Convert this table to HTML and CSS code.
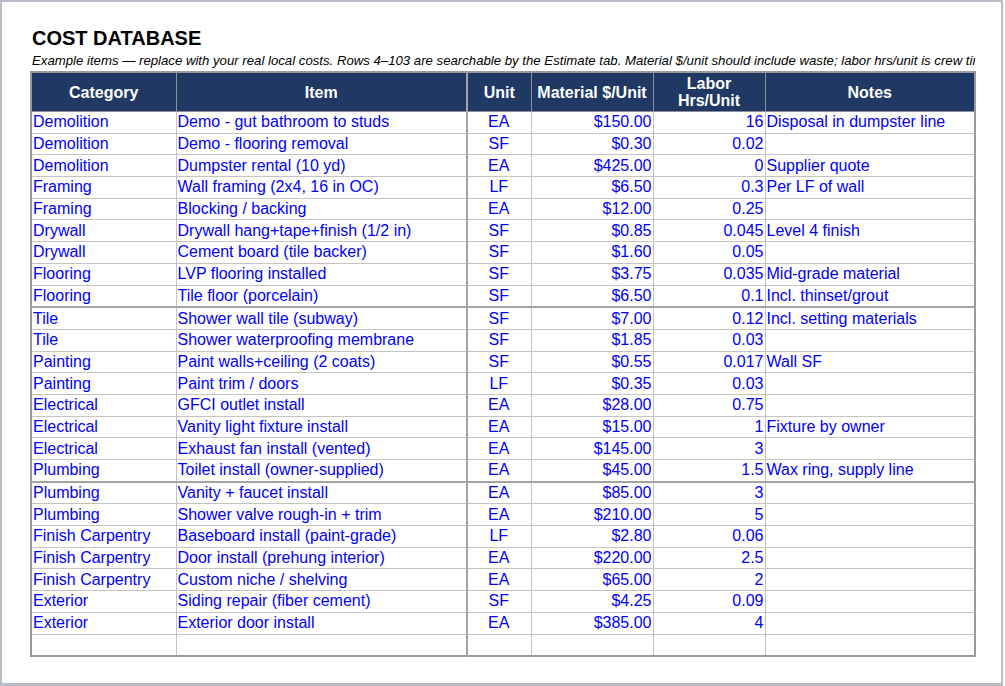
FILE: index.html
```html
<!DOCTYPE html>
<html>
<head>
<meta charset="utf-8">
<link rel="stylesheet" href="styles.css">
</head>
<body>
<div class="sheet">
  <h1 class="title">COST DATABASE</h1>
  <p class="subtitle">Example items — replace with your real local costs. Rows 4–103 are searchable by the Estimate tab. Material $/unit should include waste; labor hrs/unit is crew time per unit.</p>
  <table class="grid">
    <colgroup>
      <col class="c-cat"><col class="c-item"><col class="c-unit"><col class="c-mat"><col class="c-lab"><col class="c-notes">
    </colgroup>
    <thead>
      <tr>
        <th>Category</th><th class="b-right">Item</th><th>Unit</th><th>Material $/Unit</th><th>Labor<br>Hrs/Unit</th><th>Notes</th>
      </tr>
    </thead>
    <tbody>
      <tr><td>Demolition</td><td class="b-right">Demo - gut bathroom to studs</td><td class="ctr">EA</td><td class="num">$150.00</td><td class="num">16</td><td>Disposal in dumpster line</td></tr>
      <tr><td>Demolition</td><td class="b-right">Demo - flooring removal</td><td class="ctr">SF</td><td class="num">$0.30</td><td class="num">0.02</td><td></td></tr>
      <tr><td>Demolition</td><td class="b-right">Dumpster rental (10 yd)</td><td class="ctr">EA</td><td class="num">$425.00</td><td class="num">0</td><td>Supplier quote</td></tr>
      <tr><td>Framing</td><td class="b-right">Wall framing (2x4, 16 in OC)</td><td class="ctr">LF</td><td class="num">$6.50</td><td class="num">0.3</td><td>Per LF of wall</td></tr>
      <tr><td>Framing</td><td class="b-right">Blocking / backing</td><td class="ctr">EA</td><td class="num">$12.00</td><td class="num">0.25</td><td></td></tr>
      <tr><td>Drywall</td><td class="b-right">Drywall hang+tape+finish (1/2 in)</td><td class="ctr">SF</td><td class="num">$0.85</td><td class="num">0.045</td><td>Level 4 finish</td></tr>
      <tr><td>Drywall</td><td class="b-right">Cement board (tile backer)</td><td class="ctr">SF</td><td class="num">$1.60</td><td class="num">0.05</td><td></td></tr>
      <tr><td>Flooring</td><td class="b-right">LVP flooring installed</td><td class="ctr">SF</td><td class="num">$3.75</td><td class="num">0.035</td><td>Mid-grade material</td></tr>
      <tr><td>Flooring</td><td class="b-right">Tile floor (porcelain)</td><td class="ctr">SF</td><td class="num">$6.50</td><td class="num">0.1</td><td>Incl. thinset/grout</td></tr>
      <tr class="brk"><td>Tile</td><td class="b-right">Shower wall tile (subway)</td><td class="ctr">SF</td><td class="num">$7.00</td><td class="num">0.12</td><td>Incl. setting materials</td></tr>
      <tr><td>Tile</td><td class="b-right">Shower waterproofing membrane</td><td class="ctr">SF</td><td class="num">$1.85</td><td class="num">0.03</td><td></td></tr>
      <tr><td>Painting</td><td class="b-right">Paint walls+ceiling (2 coats)</td><td class="ctr">SF</td><td class="num">$0.55</td><td class="num">0.017</td><td>Wall SF</td></tr>
      <tr><td>Painting</td><td class="b-right">Paint trim / doors</td><td class="ctr">LF</td><td class="num">$0.35</td><td class="num">0.03</td><td></td></tr>
      <tr><td>Electrical</td><td class="b-right">GFCI outlet install</td><td class="ctr">EA</td><td class="num">$28.00</td><td class="num">0.75</td><td></td></tr>
      <tr><td>Electrical</td><td class="b-right">Vanity light fixture install</td><td class="ctr">EA</td><td class="num">$15.00</td><td class="num">1</td><td>Fixture by owner</td></tr>
      <tr><td>Electrical</td><td class="b-right">Exhaust fan install (vented)</td><td class="ctr">EA</td><td class="num">$145.00</td><td class="num">3</td><td></td></tr>
      <tr><td>Plumbing</td><td class="b-right">Toilet install (owner-supplied)</td><td class="ctr">EA</td><td class="num">$45.00</td><td class="num">1.5</td><td>Wax ring, supply line</td></tr>
      <tr class="brk"><td>Plumbing</td><td class="b-right">Vanity + faucet install</td><td class="ctr">EA</td><td class="num">$85.00</td><td class="num">3</td><td></td></tr>
      <tr><td>Plumbing</td><td class="b-right">Shower valve rough-in + trim</td><td class="ctr">EA</td><td class="num">$210.00</td><td class="num">5</td><td></td></tr>
      <tr><td>Finish Carpentry</td><td class="b-right">Baseboard install (paint-grade)</td><td class="ctr">LF</td><td class="num">$2.80</td><td class="num">0.06</td><td></td></tr>
      <tr><td>Finish Carpentry</td><td class="b-right">Door install (prehung interior)</td><td class="ctr">EA</td><td class="num">$220.00</td><td class="num">2.5</td><td></td></tr>
      <tr><td>Finish Carpentry</td><td class="b-right">Custom niche / shelving</td><td class="ctr">EA</td><td class="num">$65.00</td><td class="num">2</td><td></td></tr>
      <tr><td>Exterior</td><td class="b-right">Siding repair (fiber cement)</td><td class="ctr">SF</td><td class="num">$4.25</td><td class="num">0.09</td><td></td></tr>
      <tr><td>Exterior</td><td class="b-right">Exterior door install</td><td class="ctr">EA</td><td class="num">$385.00</td><td class="num">4</td><td></td></tr>
      <tr><td></td><td class="b-right"></td><td></td><td></td><td></td><td></td></tr>
    </tbody>
  </table>
</div>
</body>
</html>
```

FILE: styles.css
```css
html, body {
  margin: 0;
  padding: 0;
  background: #ffffff;
}

.sheet {
  box-sizing: border-box;
  width: 1003px;
  height: 686px;
  border: 2px solid #b9bcc6;
  border-bottom-width: 3px;
  padding: 24px 0 0 28px;
  font-family: "Liberation Sans", Arial, sans-serif;
  overflow: hidden;
}

.title {
  margin: 0 0 3px 2px;
  font-size: 20px;
  line-height: 24px;
  font-weight: bold;
  color: #000000;
}

.subtitle {
  margin: 0 0 2px 2px;
  width: 943px;
  font-size: 13.2px;
  line-height: 16px;
  font-style: italic;
  color: #000000;
  white-space: nowrap;
  overflow: hidden;
}

.grid {
  border-collapse: collapse;
  table-layout: fixed;
  width: 944px;
  border: 2px solid #9a9a9a;
  font-size: 16px;
}

.c-cat { width: 145px; }
.c-item { width: 291px; }
.c-unit { width: 64px; }
.c-mat { width: 122px; }
.c-lab { width: 112px; }
.c-notes { width: 210px; }

.grid th {
  background: #1f3864;
  color: #ffffff;
  font-weight: bold;
  font-size: 16px;
  line-height: 17px;
  height: 38px;
  padding: 0 2px;
  border: 1px solid #8a8f99;
  text-align: center;
  vertical-align: middle;
}

.grid td {
  height: 20.7px;
  padding: 0 2px 0 1px;
  border: 1px solid #c4c4c4;
  color: #0000ff;
  line-height: 18px;
  white-space: nowrap;
  overflow: hidden;
  vertical-align: middle;
}

.grid .b-right {
  border-right: 2px solid #a3a3a3;
}

.grid tr.brk td {
  border-top: 2px solid #a3a3a3;
}

.grid td.ctr { text-align: center; }
.grid td.num { text-align: right; padding-right: 1px; }
```
